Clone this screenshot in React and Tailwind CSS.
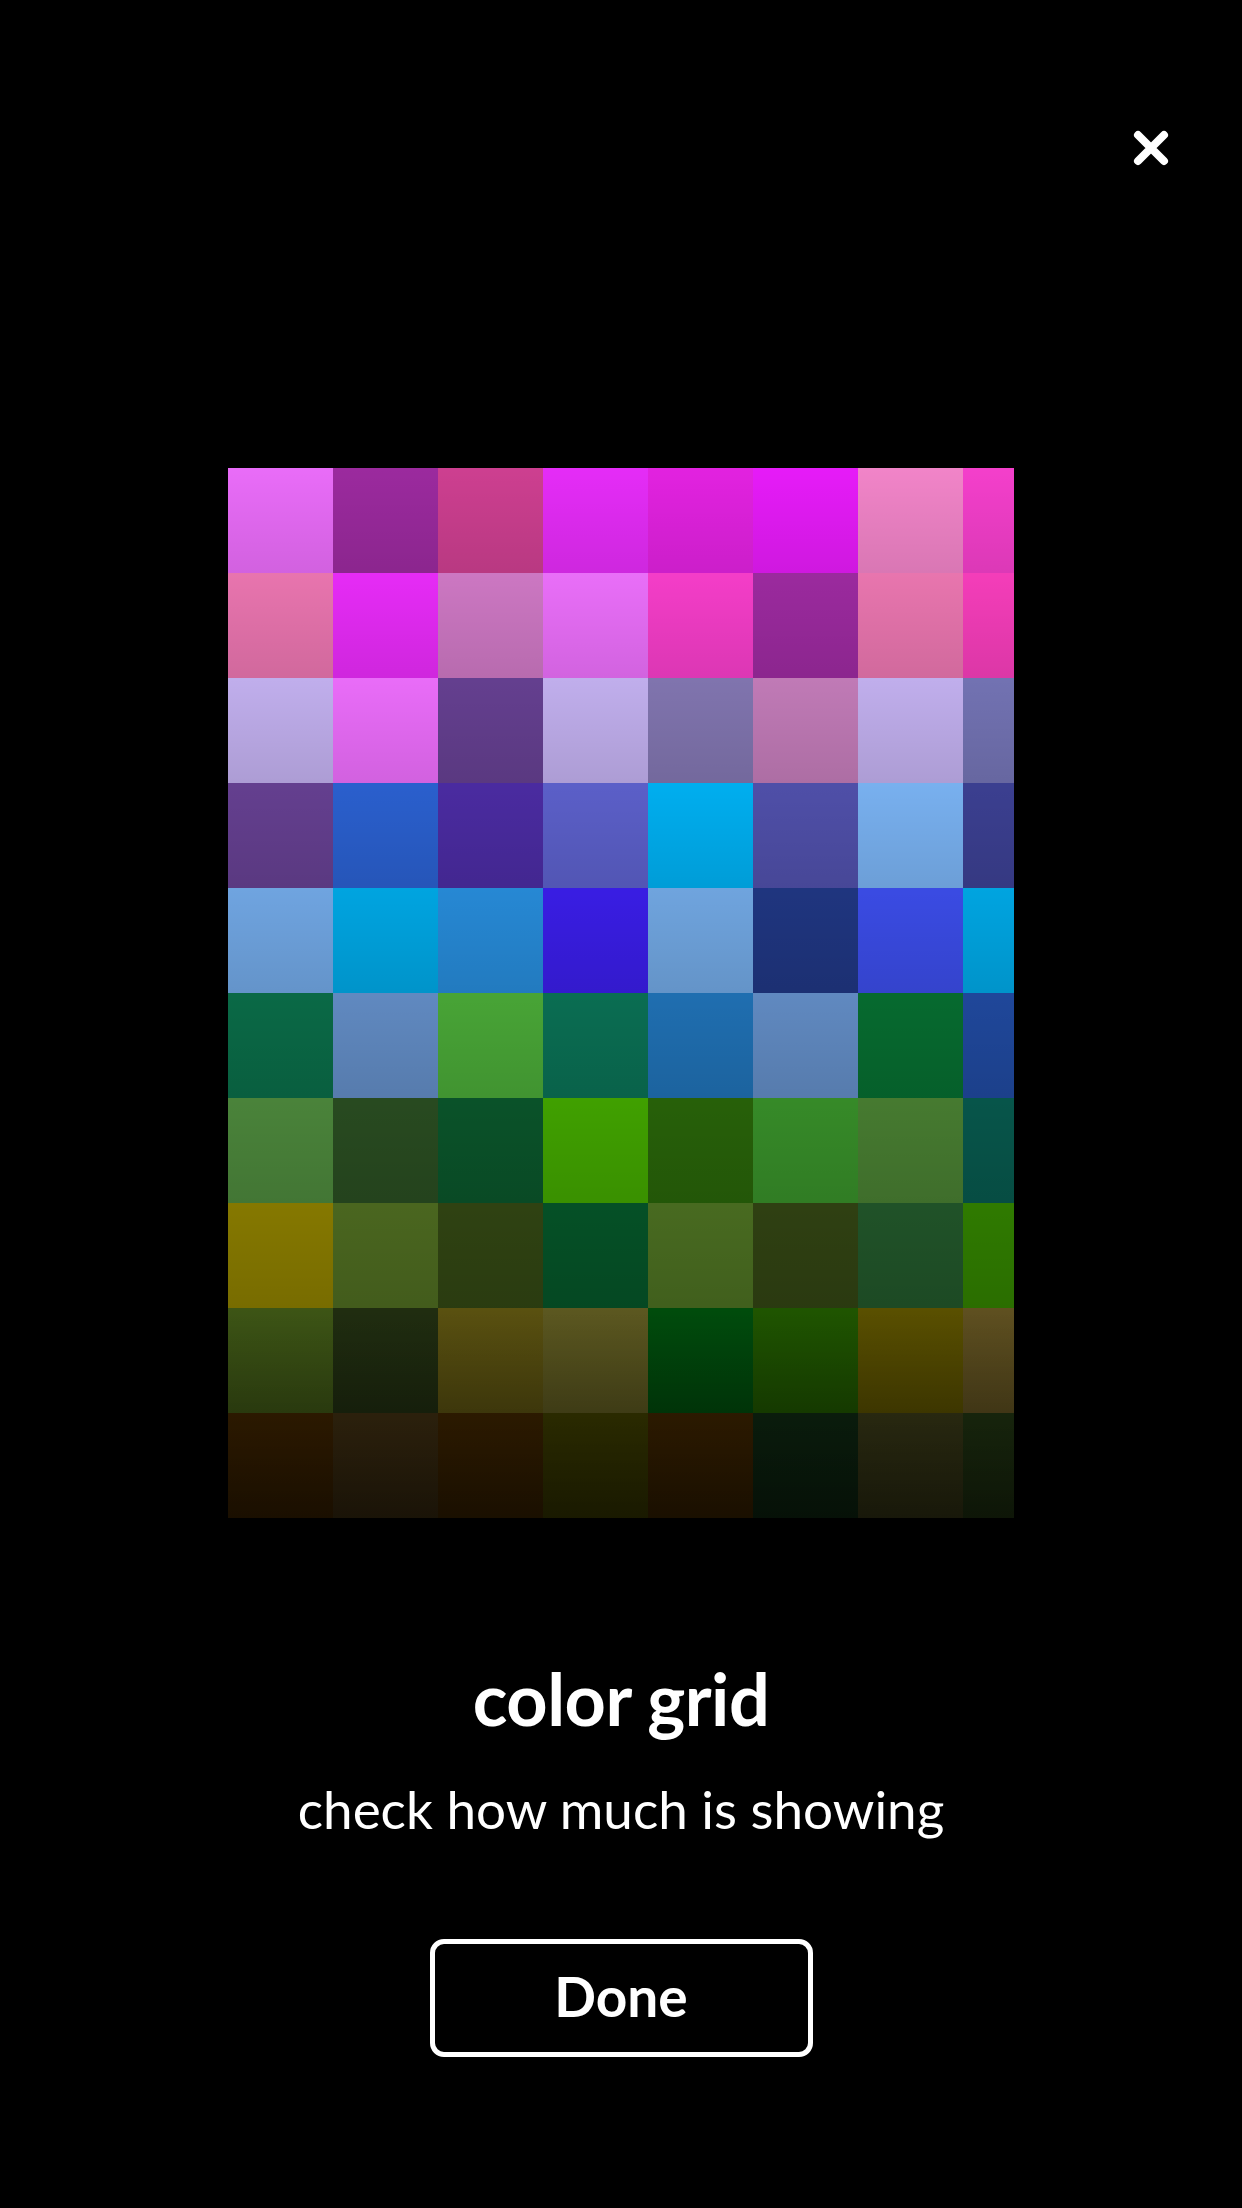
const colors = [
  ['#e96cf8', '#9b2a9e', '#cd3f90', '#e52cf7', '#e222e0', '#e61bf8', '#f184c8', '#f43fcb'],
  ['#e874ae', '#e62bf6', '#cc77c2', '#e96ef8', '#f43dc8', '#9b2a9e', '#e875ae', '#f43db9'],
  ['#c0aeec', '#e96cf8', '#643f8f', '#c0aeec', '#8074ae', '#c07ab6', '#c0aeec', '#7272b2'],
  ['#643f8f', '#2a5fcd', '#4a2ba0', '#5b5fc8', '#00aeef', '#4f4fa8', '#78b0ef', '#3b3f90'],
  ['#6fa4e0', '#00a4e0', '#2688d4', '#391de3', '#6fa4de', '#1f357f', '#3a4be3', '#00a4e0'],
  ['#0a6946', '#6089c0', '#48a436', '#0a6d52', '#1f6eb0', '#6089c0', '#066a2f', '#1f479a'],
  ['#4a833a', '#284a20', '#0a5229', '#40a000', '#276009', '#368a28', '#467a30', '#07554a'],
  ['#857800', '#4a661f', '#2f4212', '#055026', '#486a20', '#2f4012', '#205228', '#2f7a00'],
  ['#3d5515', '#202d10', '#5a5110', '#5c5820', '#004c0c', '#1f5500', '#5a5000', '#5f5020'],
  ['#3a2100', '#3a2b10', '#3a2200', '#383800', '#3a2200', '#0d2510', '#353515', '#1e3010'],
]

function CloseIcon() {
  return (
    <svg width="36" height="36" viewBox="0 0 36 36" fill="none">
      <path d="M5 5 L31 31 M31 5 L5 31" stroke="white" strokeWidth="8" strokeLinecap="round" />
    </svg>
  )
}

export default function App() {
  return (
    <div className="flex flex-col items-center w-[1242px] min-h-[2208px] bg-black text-white" style={{ fontFamily: 'Lato, "Open Sans", sans-serif' }}>
      <div className="flex justify-end w-full pt-[130px] pr-[73px]">
        <button className="flex items-center justify-center">
          <CloseIcon />
        </button>
      </div>

      <div className="relative mt-[302px] w-[786px] h-[1050px] overflow-hidden">
        <div className="grid grid-cols-[repeat(8,105px)] grid-rows-[repeat(10,105px)] w-[840px]">
          {colors.flat().map((c, i) => (
            <div key={i} className="bg-linear-to-b from-transparent to-black/10" style={{ backgroundColor: c }} />
          ))}
        </div>
        <div className="absolute inset-0 bg-linear-to-b from-transparent from-80% to-black/50" />
      </div>

      <h1 className="mt-[144px] text-[72px] font-bold leading-none tracking-[-0.5px]">color grid</h1>
      <p className="mt-[48px] text-[53px] leading-none">check how much is showing</p>

      <button className="mt-[104px] flex items-center justify-center w-[383px] h-[118px] border-[5px] border-white rounded-[14px] text-[55px] font-bold leading-none pb-[4px]">
        Done
      </button>
    </div>
  )
}
